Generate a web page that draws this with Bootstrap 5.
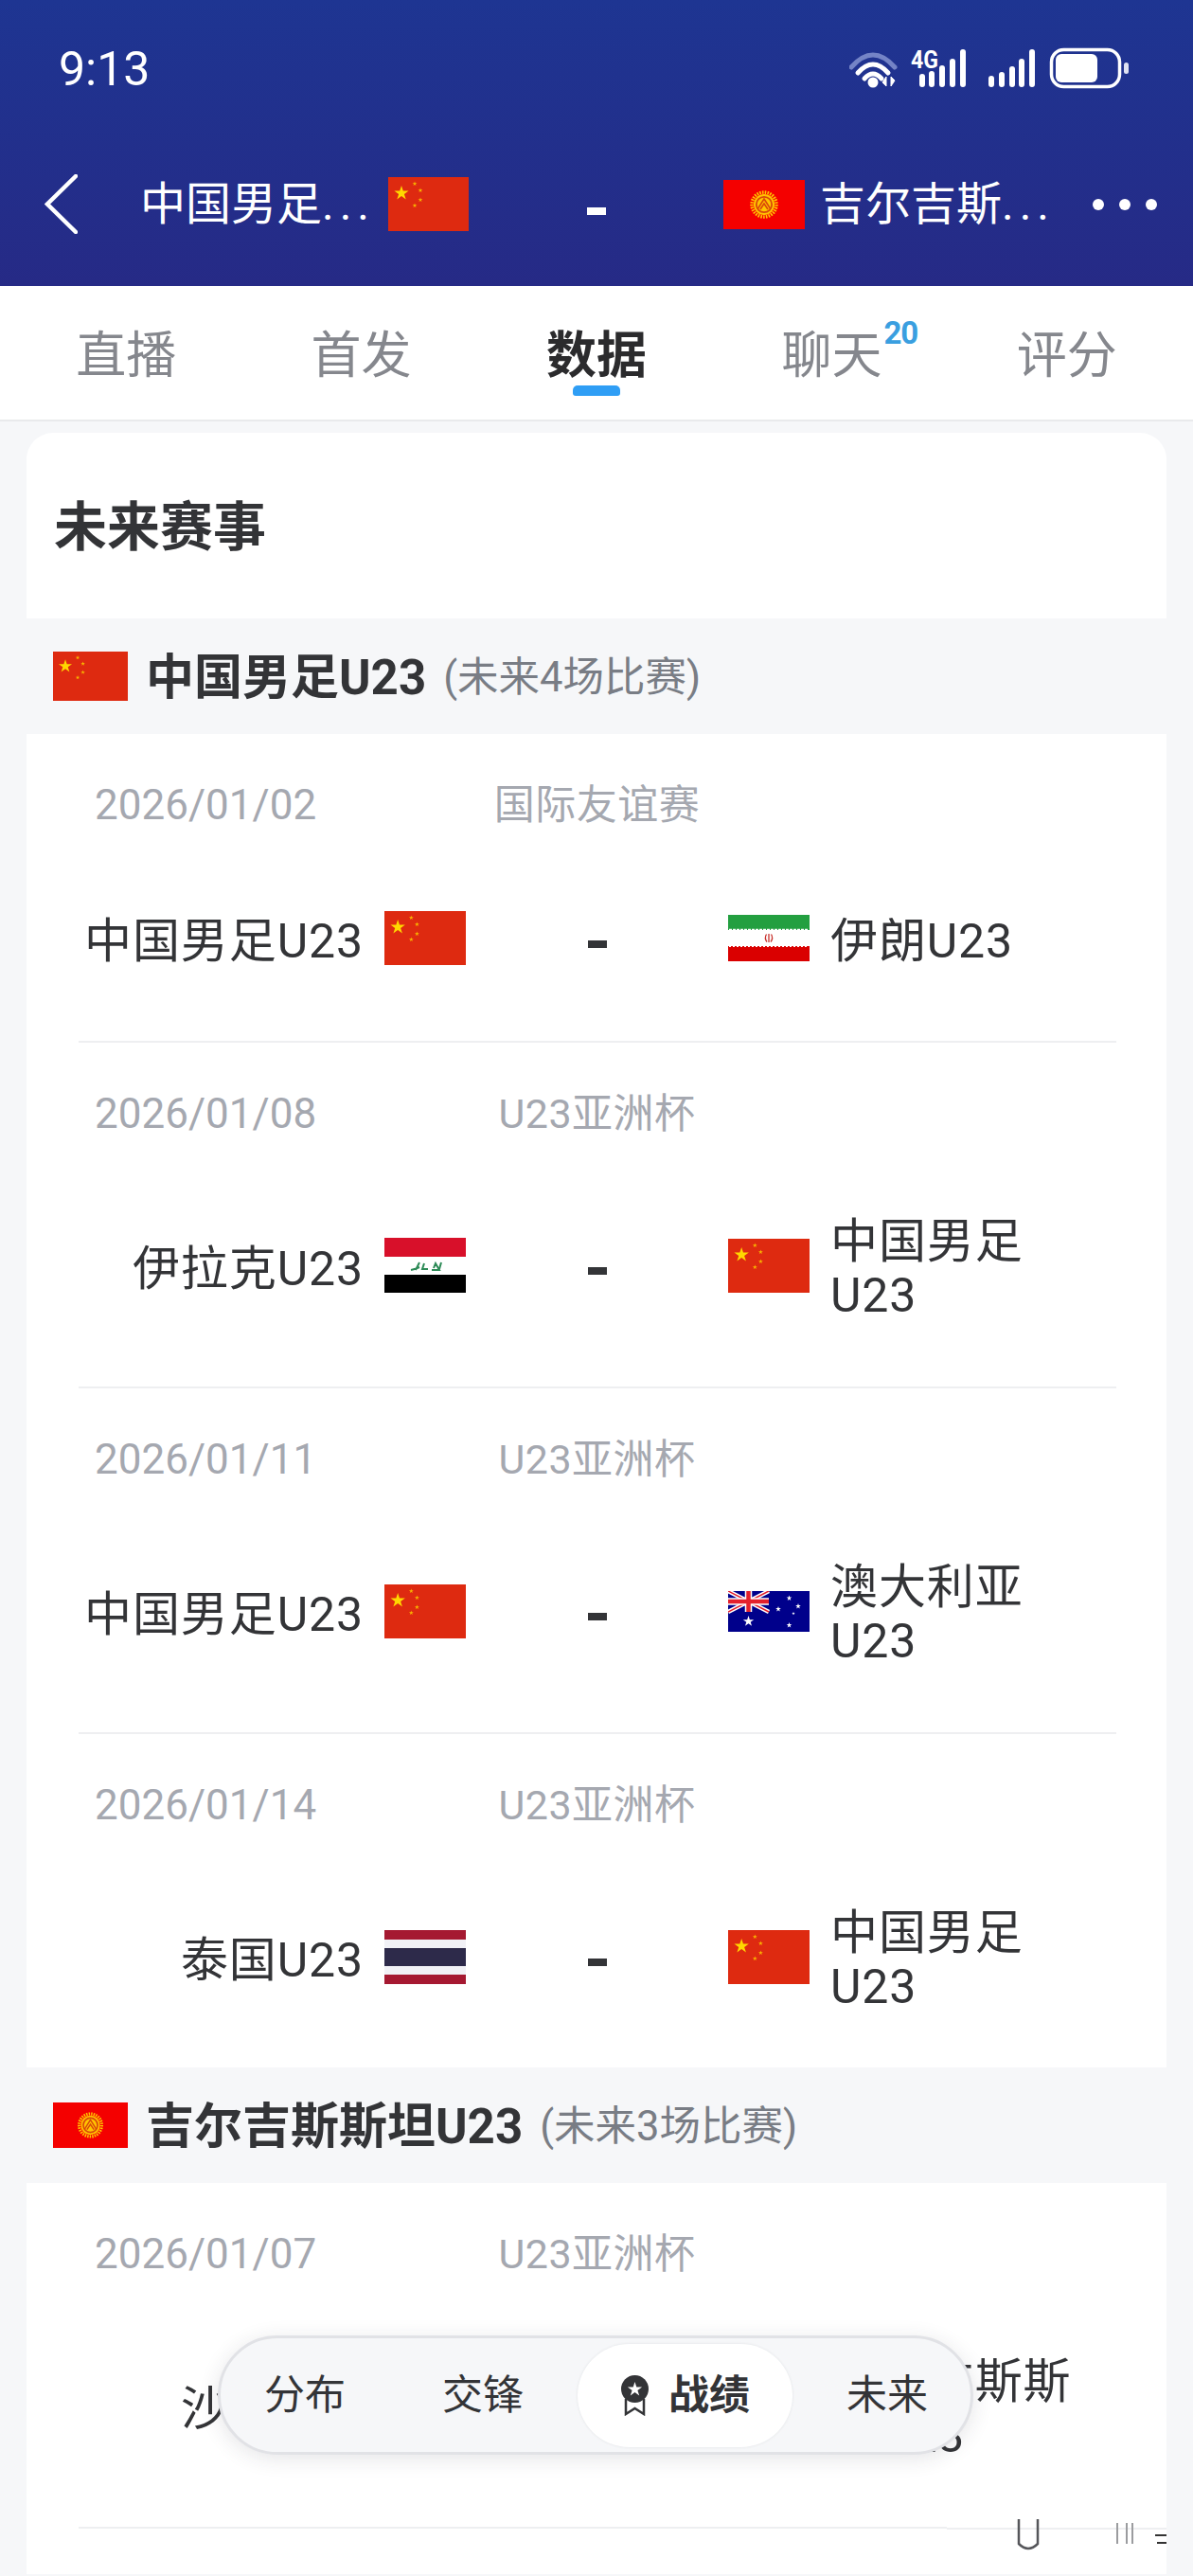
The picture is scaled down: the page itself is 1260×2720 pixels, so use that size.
<!DOCTYPE html>
<html lang="zh-CN">
<head>
    <meta charset="UTF-8">
    <meta name="viewport" content="width=device-width, initial-scale=1.0">
    <title>未来赛事</title>
    <link href="https://cdn.jsdelivr.net/npm/bootstrap@5.3.0/dist/css/bootstrap.min.css" rel="stylesheet">
    <style>
        html, body {
            height: 2720px;
            overflow: hidden;
        }
        body {
            position: relative;
            width: 1260px;
            background-color: #f6f7f9;
            color: #333437;
            font-family: Roboto, "Noto Sans CJK SC", sans-serif;
        }
        .top-head {
            height: 302px;
            background: linear-gradient(180deg, #1e3592 0%, #262a86 100%);
            color: #fff;
        }
        .status-row {
            height: 187px;
            padding: 41px 68px 0 62px;
        }
        .clock {
            margin-top: 10px;
            font-size: 50px;
            line-height: 44px;
        }
        .head-row {
            height: 57px;
            padding: 0 38px 0 47px;
            font-size: 48px;
            line-height: 57px;
            font-weight: 400;
        }
        .head-side {
            width: 448px;
        }
        .head-dash {
            width: 20px;
            height: 8px;
            margin: 14px 124px 0 125px;
            background-color: #fff;
        }
        .head-back {
            width: 35px;
            height: 63px;
            margin-right: 66px;
        }
        .more-dots {
            letter-spacing: 6px;
        }
        .menu-dot {
            width: 12px;
            height: 12px;
            border-radius: 50%;
            background-color: #fff;
        }
        .tabs-bar {
            height: 143px;
            padding: 0 9px;
            background-color: #fff;
            border-bottom: 2px solid #e9eaec;
        }
        .tabs-bar .nav-link {
            height: 141px;
            padding: 41px 0 0;
            color: #85878d;
            font-size: 53px;
            line-height: 66px;
        }
        .tabs-bar .nav-link.active {
            color: #2b2b2d;
            font-weight: 700;
        }
        .tab-word {
            position: relative;
            display: inline-block;
        }
        .tab-count {
            position: absolute;
            left: 108px;
            top: -9px;
            color: #3a9fe0;
            font-size: 33px;
            line-height: 36px;
            font-weight: 700;
            letter-spacing: -1px;
        }
        .tab-mark {
            position: absolute;
            left: 28px;
            top: 64px;
            width: 50px;
            height: 11px;
            border-radius: 5px 5px 3px 3px;
            background-color: #2f9ef5;
        }
        .page-wrap {
            padding: 12px 28px 0;
        }
        .title-box {
            height: 196px;
            padding: 62px 29px 0;
            background-color: #fff;
            border-radius: 28px 28px 0 0;
        }
        .title-box h1 {
            margin: 0;
            color: #333437;
            font-size: 56px;
            line-height: 76px;
            font-weight: 700;
        }
        .group-head {
            height: 122px;
            padding-left: 28px;
        }
        .group-name {
            margin: 4px 0 0 19px;
            font-size: 51px;
            font-weight: 700;
        }
        .group-note {
            margin: 4px 0 0 18px;
            color: #797d85;
            font-size: 43.500px;
            font-weight: 400;
        }
        .match-list {
            background-color: #fff;
            padding: 0 53px 0 55px;
        }
        .match-item {
            padding: 48px 0 71px;
            border-bottom: 2px solid #eeeff1;
        }
        .match-item.last-one {
            padding-bottom: 60px;
            border-bottom: 0;
        }
        .match-top {
            height: 52px;
            margin-bottom: 78px;
            padding-left: 17px;
            color: #a5a8b0;
            font-size: 43px;
            line-height: 55px;
            font-weight: 400;
        }
        .match-date {
            width: 392px;
            font-size: 44px;
        }
        .match-comp {
            width: 277px;
            text-align: center;
            letter-spacing: .5px;
        }
        .match-body {
            min-height: 75px;
            font-size: 50px;
            line-height: 57px;
            font-weight: 400;
        }
        .team-name {
            margin: 4px 0 -4px;
            letter-spacing: .9px;
        }
        .team-home {
            width: 409px;
            gap: 22px;
        }
        .team-away {
            gap: 22px;
        }
        .team-away .team-name {
            width: 272px;
        }
        .match-dash {
            width: 277px;
            padding-top: 12px;
        }
        .match-dash span {
            display: block;
            width: 20px;
            height: 8px;
            background-color: #333437;
        }
        .flag-box {
            flex: none;
            display: block;
        }
        .float-tabs {
            position: absolute;
            left: 230px;
            top: 2466px;
            width: 798px;
            height: 126px;
            padding: 5px 45px 5px 46px;
            border: 3px solid #e1e2e6;
            border-radius: 63px;
            background-color: #f6f7f9;
            box-shadow: 0 4px 22px rgba(40, 45, 60, .12);
            font-size: 43px;
            font-weight: 400;
        }
        .float-first {
            margin-right: 45px;
        }
        .float-on {
            width: 227px;
            height: 109px;
            gap: 20px;
            border-radius: 55px;
            background-color: #fff;
            box-shadow: 0 0 3px rgba(40, 45, 60, .1);
            font-weight: 700;
        }
        .ghost-mark {
            position: absolute;
            left: 1000px;
            top: 2656px;
        }
    </style>
</head>
<body>
    <!-- shared flags -->
    <svg width="0" height="0" class="position-absolute">
        <defs>
            <polygon id="star5" points="0,-1 .225,-.309 .951,-.309 .363,.118 .588,.809 0,.382 -.588,.809 -.363,.118 -.951,-.309 -.225,-.309"/>
        </defs>
        <symbol id="f-cn" viewBox="0 0 85 57" preserveAspectRatio="none">
            <rect width="85" height="57" fill="#de2a10"/>
            <use href="#star5" transform="translate(14 17) scale(8)" fill="#ffd800"/>
            <use href="#star5" transform="translate(28 7) scale(2.6)" fill="#f8b400"/>
            <use href="#star5" transform="translate(34 14) scale(2.6)" fill="#f8b400"/>
            <use href="#star5" transform="translate(34 24) scale(2.6)" fill="#f8b400"/>
            <use href="#star5" transform="translate(28 30) scale(2.6)" fill="#f8b400"/>
        </symbol>
        <symbol id="f-kg" viewBox="0 0 86 52" preserveAspectRatio="none">
            <rect width="86" height="52" fill="#f40000"/>
            <circle cx="43" cy="26" r="13" fill="none" stroke="#ffc400" stroke-width="3.5" stroke-dasharray="1.6 1.2"/>
            <circle cx="43" cy="26" r="11" fill="#ffc400"/>
            <circle cx="43" cy="26" r="8.2" fill="none" stroke="#d9480a" stroke-width="1.8"/>
            <path d="M36 31 43 20 50 31M39 31 43 25 47 31" fill="none" stroke="#d9480a" stroke-width="1.6"/>
        </symbol>
        <symbol id="f-ir" viewBox="0 0 86 49" preserveAspectRatio="none">
            <rect width="86" height="49" fill="#fff"/>
            <rect width="86" height="16" fill="#239f40"/>
            <rect y="33" width="86" height="16" fill="#da0000"/>
            <path d="M1 15.500H85" stroke="#fff" stroke-width="1.600" stroke-dasharray="3 1"/>
            <path d="M1 33.500H85" stroke="#fff" stroke-width="1.200" stroke-dasharray="2 2"/>
            <path d="M43 20V29M40.500 20.500Q38 24.500 41 28.500M45.500 20.500Q48 24.500 45 28.500" fill="none" stroke="#c8312c" stroke-width="1.300"/>
        </symbol>
        <symbol id="f-iq" viewBox="0 0 86 58" preserveAspectRatio="none">
            <rect width="86" height="58" fill="#fff"/>
            <rect width="86" height="20" fill="#d8102a"/>
            <rect y="39" width="86" height="19" fill="#000"/>
            <path d="M28 34Q33 33 37 31M33 34 37 26M46 33H40L42 27M50 34H58L54 27 52 32M58 33 60 26" fill="none" stroke="#2c8a56" stroke-width="2"/>
        </symbol>
        <symbol id="f-au" viewBox="0 0 86 43" preserveAspectRatio="none">
            <rect width="86" height="43" fill="#00008b"/>
            <path d="M0 0 43 22M43 0 0 22" stroke="#fff" stroke-width="4.500"/>
            <path d="M0 0 43 22M43 0 0 22" stroke="#e4202c" stroke-width="1.500"/>
            <path d="M21.500 0V22M0 11H43" stroke="#fff" stroke-width="7.500"/>
            <path d="M21.500 0V22M0 11H43" stroke="#e4202c" stroke-width="4.500"/>
            <use href="#star5" transform="translate(21.500 32) scale(6)" fill="#fff"/>
            <use href="#star5" transform="translate(64.500 7.500) scale(3)" fill="#fff"/>
            <use href="#star5" transform="translate(53 19) scale(3)" fill="#fff"/>
            <use href="#star5" transform="translate(74 16) scale(3)" fill="#fff"/>
            <use href="#star5" transform="translate(69 23.500) scale(1.800)" fill="#fff"/>
            <use href="#star5" transform="translate(64.500 36) scale(3)" fill="#fff"/>
        </symbol>
        <symbol id="f-th" viewBox="0 0 86 57" preserveAspectRatio="none">
            <rect width="86" height="57" fill="#f1f1f6"/>
            <rect width="86" height="10" fill="#a51931"/>
            <rect y="47" width="86" height="10" fill="#a51931"/>
            <rect y="19" width="86" height="19" fill="#2d2a4a"/>
        </symbol>
    </svg>

    <header class="top-head">
        <div class="status-row d-flex justify-content-between align-items-start">
            <div class="clock">9:13</div>
            <svg width="295" height="54" viewBox="897 41 295 54">
                <g fill="none" stroke-linecap="round">
                    <path d="M899 71Q922 45 945 71" stroke="#7484c6" stroke-width="5"/>
                    <path d="M906 77Q922 59 938 77" stroke="#fff" stroke-width="5"/>
                    <path d="M913 83Q922 73 931 83" stroke="#fff" stroke-width="5"/>
                </g>
                <circle cx="922" cy="87" r="5.500" fill="#fff"/>
                <path d="M936 81V91L932 87ZM941 91V81L945 85Z" fill="#fff" stroke="#fff" stroke-width="1"/>
                <text x="962" y="72" fill="#fff" font-family="Roboto, sans-serif" font-size="25" font-weight="700" textLength="29" lengthAdjust="spacingAndGlyphs">4G</text>
                <g stroke="#fff" stroke-width="6" stroke-linecap="round">
                    <path d="M974 81V89M984 78V89M995 72V89M1006 65V89M1017 55V89"/>
                    <path d="M1047 83V89M1058 79V89M1069 73V89M1079 65V89M1090 55V89"/>
                </g>
                <rect x="1110.500" y="52.500" width="72" height="39" rx="13" fill="none" stroke="#fff" stroke-width="3.500"/>
                <rect x="1115" y="57" width="44" height="30" rx="6" fill="#fff"/>
                <rect x="1187" y="66" width="5" height="12" rx="2.500" fill="#dfe2f2"/>
            </svg>
        </div>
        <div class="head-row d-flex align-items-center">
            <div class="head-side d-flex align-items-center">
                <svg class="head-back" viewBox="0 0 35 63">
                    <path d="M33 2 3 31.500 33 61" fill="none" stroke="#fff" stroke-width="4.500" stroke-linecap="round"/>
                </svg>
                <span>中国男足<span class="more-dots">...</span></span>
                <svg class="flag-box ms-auto" width="85" height="57"><use href="#f-cn"/></svg>
            </div>
            <div class="head-dash flex-shrink-0"></div>
            <div class="d-flex align-items-center flex-grow-1">
                <svg class="flag-box" width="86" height="52"><use href="#f-kg"/></svg>
                <span class="ms-3">吉尔吉斯<span class="more-dots">...</span></span>
                <div class="ms-auto d-flex gap-3">
                    <span class="menu-dot"></span><span class="menu-dot"></span><span class="menu-dot"></span>
                </div>
            </div>
        </div>
    </header>

    <nav class="tabs-bar">
        <ul class="nav nav-justified">
            <li class="nav-item"><a class="nav-link" href="#">直播</a></li>
            <li class="nav-item"><a class="nav-link" href="#">首发</a></li>
            <li class="nav-item"><a class="nav-link active" href="#"><span class="tab-word">数据<span class="tab-mark"></span></span></a></li>
            <li class="nav-item"><a class="nav-link" href="#"><span class="tab-word">聊天<span class="tab-count">20</span></span></a></li>
            <li class="nav-item"><a class="nav-link" href="#">评分</a></li>
        </ul>
    </nav>

    <main class="page-wrap">
        <div class="title-box"><h1>未来赛事</h1></div>

        <div class="group-head d-flex align-items-center">
            <svg class="flag-box" width="79" height="52"><use href="#f-cn"/></svg>
            <span class="group-name">中国男足U23</span>
            <span class="group-note">(未来4场比赛)</span>
        </div>
        <div class="match-list">
            <div class="match-item">
                <div class="match-top d-flex"><div class="match-date">2026/01/02</div><div class="match-comp">国际友谊赛</div></div>
                <div class="match-body d-flex align-items-center">
                    <div class="team-home d-flex justify-content-end align-items-center"><span class="team-name text-end">中国男足U23</span><svg class="flag-box" width="86" height="57"><use href="#f-cn"/></svg></div>
                    <div class="match-dash d-flex justify-content-center"><span></span></div>
                    <div class="team-away d-flex align-items-center"><svg class="flag-box" width="86" height="49"><use href="#f-ir"/></svg><span class="team-name">伊朗U23</span></div>
                </div>
            </div>
            <div class="match-item">
                <div class="match-top d-flex"><div class="match-date">2026/01/08</div><div class="match-comp">U23亚洲杯</div></div>
                <div class="match-body d-flex align-items-center">
                    <div class="team-home d-flex justify-content-end align-items-center"><span class="team-name text-end">伊拉克U23</span><svg class="flag-box" width="86" height="58"><use href="#f-iq"/></svg></div>
                    <div class="match-dash d-flex justify-content-center"><span></span></div>
                    <div class="team-away d-flex align-items-center"><svg class="flag-box" width="86" height="57"><use href="#f-cn"/></svg><span class="team-name">中国男足U23</span></div>
                </div>
            </div>
            <div class="match-item">
                <div class="match-top d-flex"><div class="match-date">2026/01/11</div><div class="match-comp">U23亚洲杯</div></div>
                <div class="match-body d-flex align-items-center">
                    <div class="team-home d-flex justify-content-end align-items-center"><span class="team-name text-end">中国男足U23</span><svg class="flag-box" width="86" height="57"><use href="#f-cn"/></svg></div>
                    <div class="match-dash d-flex justify-content-center"><span></span></div>
                    <div class="team-away d-flex align-items-center"><svg class="flag-box" width="86" height="43"><use href="#f-au"/></svg><span class="team-name">澳大利亚U23</span></div>
                </div>
            </div>
            <div class="match-item last-one">
                <div class="match-top d-flex"><div class="match-date">2026/01/14</div><div class="match-comp">U23亚洲杯</div></div>
                <div class="match-body d-flex align-items-center">
                    <div class="team-home d-flex justify-content-end align-items-center"><span class="team-name text-end">泰国U23</span><svg class="flag-box" width="86" height="57"><use href="#f-th"/></svg></div>
                    <div class="match-dash d-flex justify-content-center"><span></span></div>
                    <div class="team-away d-flex align-items-center"><svg class="flag-box" width="86" height="57"><use href="#f-cn"/></svg><span class="team-name">中国男足U23</span></div>
                </div>
            </div>
        </div>

        <div class="group-head d-flex align-items-center">
            <svg class="flag-box" width="79" height="48"><use href="#f-kg"/></svg>
            <span class="group-name">吉尔吉斯斯坦U23</span>
            <span class="group-note">(未来3场比赛)</span>
        </div>
        <div class="match-list pb-5">
            <div class="match-item">
                <div class="match-top d-flex"><div class="match-date">2026/01/07</div><div class="match-comp">U23亚洲杯</div></div>
                <div class="match-body d-flex align-items-center">
                    <div class="team-home d-flex justify-content-end align-items-center"><span class="team-name text-end">沙特U23</span><svg class="flag-box" width="86" height="57"><use href="#f-cn"/></svg></div>
                    <div class="match-dash d-flex justify-content-center"><span></span></div>
                    <div class="team-away d-flex align-items-center"><svg class="flag-box" width="86" height="52"><use href="#f-kg"/></svg><span class="team-name">吉尔吉斯斯坦U23</span></div>
                </div>
            </div>
        </div>
    </main>

    <svg class="ghost-mark" width="232" height="40" viewBox="0 0 232 40">
        <rect width="232" height="40" fill="#fff"/>
        <path d="M0 14H232" stroke="#eeeff1" stroke-width="2"/>
        <path d="M76 4V30Q86 40 96 30V4" fill="none" stroke="#55565a" stroke-width="2.500"/>
        <path d="M180 8V30M190 8V30M196 8V30" stroke="#9b9c9f" stroke-width="2"/>
        <path d="M220 21H232M222 29H232" stroke="#333" stroke-width="2"/>
    </svg>

    <div class="float-tabs d-flex align-items-center justify-content-between">
        <span class="float-first">分布</span>
        <span>交锋</span>
        <span class="float-on d-flex align-items-center justify-content-center">
            <svg width="31" height="43" viewBox="0 0 31 43">
                <path d="M6 25V41L15.500 35 25 41V25" fill="none" stroke="#333437" stroke-width="2.500"/>
                <circle cx="15.500" cy="14.500" r="14.500" fill="#333437"/>
                <use href="#star5" transform="translate(15.500 15) scale(8)" fill="#fff"/>
            </svg>
            <span>战绩</span>
        </span>
        <span>未来</span>
    </div>

    <script src="https://cdn.jsdelivr.net/npm/bootstrap@5.3.0/dist/js/bootstrap.bundle.min.js"></script>
</body>
</html>
